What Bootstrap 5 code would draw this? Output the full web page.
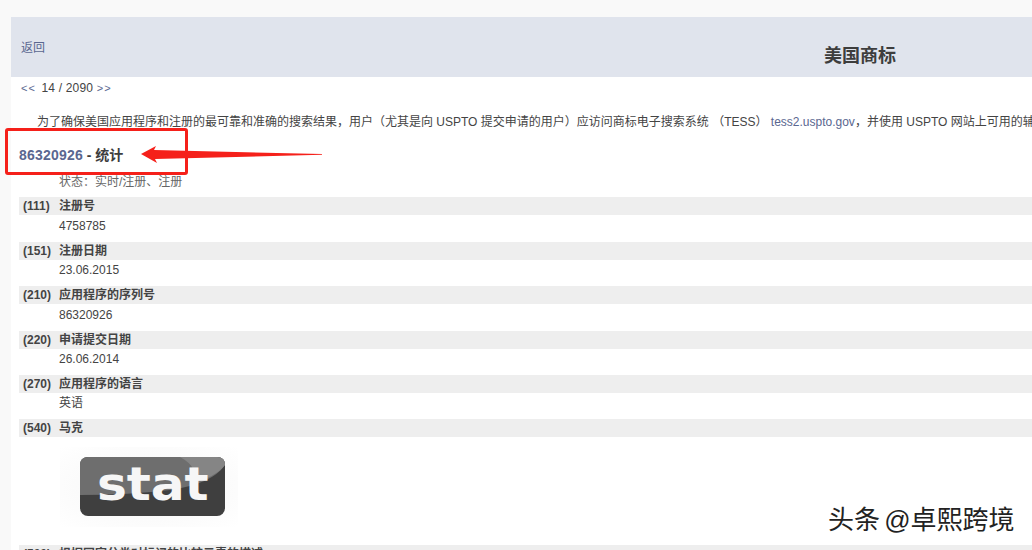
<!doctype html>
<html lang="zh"><head><meta charset="utf-8">
<title>美国商标</title>
<link href="https://cdn.jsdelivr.net/npm/bootstrap@5.3.0/dist/css/bootstrap.min.css" rel="stylesheet">
<style>
html,body{height:550px;overflow:hidden;background:#f9f9f9}
body{font:12px/18px "Liberation Sans","Noto Sans CJK SC",sans-serif;color:#444}
a{color:#5a6790;text-decoration:none}
.sheet{margin:17px 0 0 11px;background:#fff;height:533px;position:relative}
.banner{height:60px;background:#e0e4ed}
.back-link{margin:21px 0 0 10px;line-height:20px}
.banner-title{position:absolute;left:813px;top:29px;font-size:18px;line-height:20px;font-weight:700;color:#3d3d3d;white-space:nowrap}
.pager{height:21px;padding:2px 0 0 10px;line-height:18px;letter-spacing:.2px}
.pager a{font-size:11px;letter-spacing:1px;margin-right:2px}
.intro{margin:15px 0 0;padding-left:26px;white-space:nowrap;line-height:18px}
.rec-title{margin:14px 0 0 8px;font-size:14px;font-weight:700;line-height:20px;color:#3d3d3d}
.rec-title a{color:#5a6790;letter-spacing:.2px}
.rec-status{margin:8px 0 0 48px;line-height:18px;color:#666}
.rows{margin:6.2px 0 0 8px}
.rhead{height:18px;background:#eee;font-weight:700;display:flex;color:#444}
.rhead b{width:40px;padding-left:4px;flex:none}
.rval{height:26.45px;padding:1.5px 0 0 40px;line-height:18px}
.markbox{height:108px;padding:10px 0 0 41px}
.markglow{width:178px;height:80px;padding:10px 0 0 20px;background:radial-gradient(ellipse at center,#f6f6f6 0,#fcfcfc 70%,#fff 100%)}
.stat-logo{display:block}
.stat-word{font:700 42px "DejaVu Sans",sans-serif;fill:#f6f6f6}
.redbox{position:absolute;left:-6px;top:111px;width:183px;height:47px;border:3px solid #f5201a;border-radius:3px}
.arrow{position:absolute;left:130px;top:128px}
.wmark{position:absolute;left:817px;top:488px;font-size:26px;line-height:30px;color:#222;white-space:nowrap;word-spacing:-3px;text-shadow:1px 1px 0 #fff,-1px 0 0 #fff}
</style></head>
<body>
<div class="sheet">
  <div class="banner d-flex">
    <a class="back-link" href="#">返回</a>
    <div class="banner-title">美国商标</div>
  </div>
  <div class="pager"><a href="#">&lt;&lt;</a> 14 / 2090 <a href="#">&gt;&gt;</a></div>
  <p class="intro">为了确保美国应用程序和注册的最可靠和准确的搜索结果，用户（尤其是向 USPTO 提交申请的用户）应访问商标电子搜索系统 （TESS） <a href="#">tess2.uspto.gov</a>，并使用 USPTO 网站上可用的辅助工具进行检索。</p>
  <div class="rec-title"><a href="#">86320926</a> - 统计</div>
  <div class="rec-status">状态：实时/注册、注册</div>
  <div class="rows">
    <div class="rhead"><b>(111)</b><span>注册号</span></div><div class="rval">4758785</div>
    <div class="rhead"><b>(151)</b><span>注册日期</span></div><div class="rval">23.06.2015</div>
    <div class="rhead"><b>(210)</b><span>应用程序的序列号</span></div><div class="rval">86320926</div>
    <div class="rhead"><b>(220)</b><span>申请提交日期</span></div><div class="rval">26.06.2014</div>
    <div class="rhead"><b>(270)</b><span>应用程序的语言</span></div><div class="rval">英语</div>
    <div class="rhead"><b>(540)</b><span>马克</span></div>
    <div class="markbox"><div class="markglow">
      <svg class="stat-logo" width="145" height="60" viewBox="0 0 145 60">
        <rect x="0" y="0" width="145" height="59" rx="8" fill="#3f3f3f"/>
        <path d="M8 0H137Q145 0 145 8V8Q132 27 90 33Q50 38 0 38V8Q0 0 8 0Z" fill="#6e6e6e"/>
        <path d="M100 0H137Q145 0 145 8V8Q136 20 110 27Q122 12 100 0Z" fill="#858585"/>
        <text class="stat-word" transform="translate(17 43) scale(1.2 1.08)" textLength="93">stat</text>
      </svg>
    </div></div>
    <div class="rhead"><b>(500)</b><span>根据国家分类对标记的比较元素的描述</span></div>
  </div>
  <div class="redbox"></div>
  <svg class="arrow" width="182" height="20" viewBox="0 0 182 20"><path d="M0 9 L15 1 L13 5 L181 9 L181 9.7 L14 14 L16 18 Z" fill="#f5201a"/></svg>
  <div class="wmark">头条 @卓熙跨境</div>
</div>
<script src="https://cdn.jsdelivr.net/npm/bootstrap@5.3.0/dist/js/bootstrap.bundle.min.js"></script>
</body></html>
